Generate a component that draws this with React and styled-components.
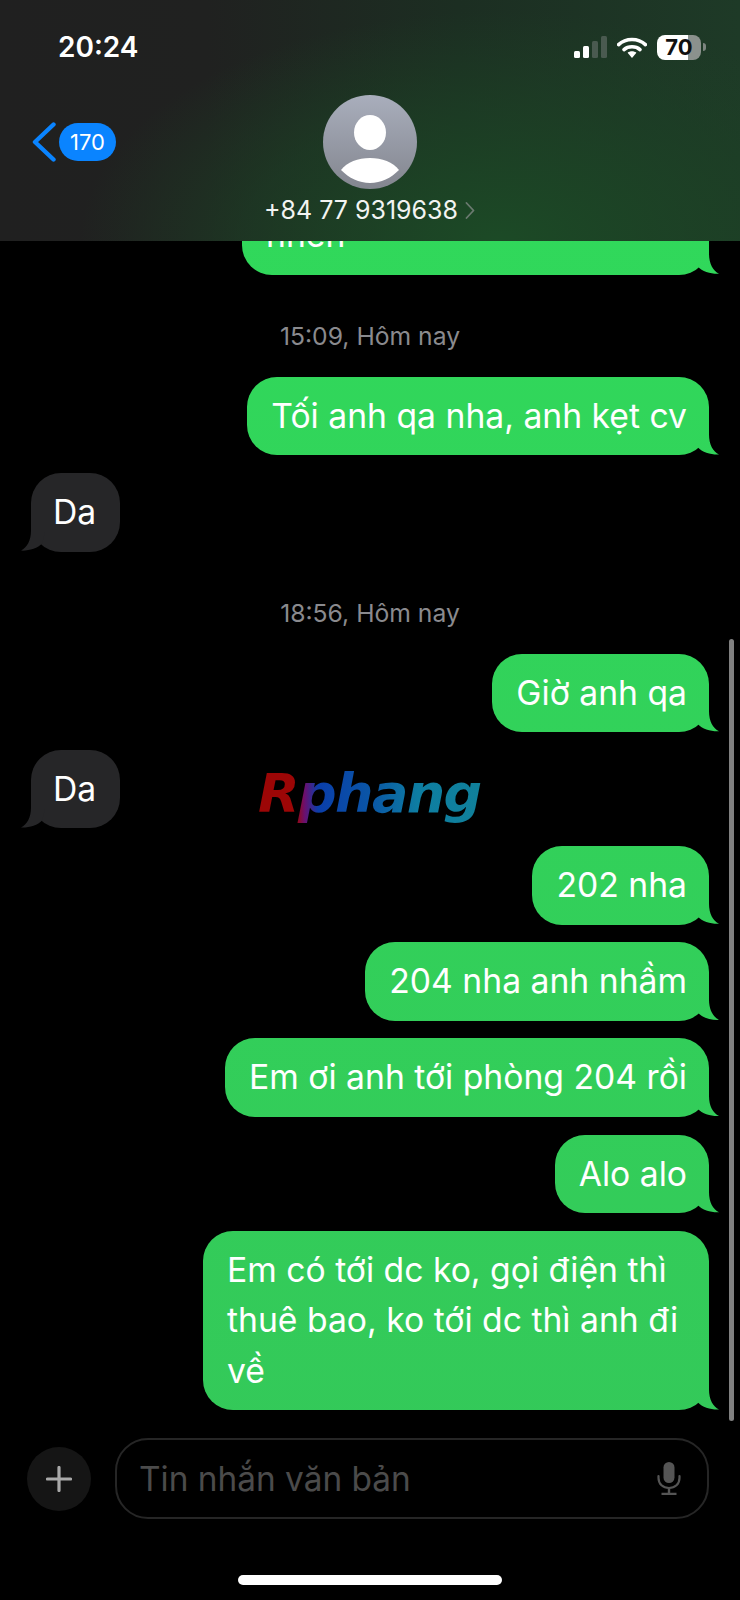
import React from "react";
import styled, { createGlobalStyle } from "styled-components";

const Global = createGlobalStyle`
  html, body { margin: 0; padding: 0; background: #000; }
  * { box-sizing: border-box; }
`;

const font = `Inter, "Noto Sans", "Liberation Sans", sans-serif`;

const Screen = styled.div`
  position: relative;
  width: 740px;
  height: 1600px;
  overflow: hidden;
  display: flex;
  flex-direction: column;
  background: #000;
  color: #fff;
  font-family: ${font};
`;

const Header = styled.header`
  height: 241px;
  flex: none;
  padding: 33px 34px 0 58px;
  background:
    radial-gradient(ellipse 420px 230px at 500px 241px, rgba(28, 74, 38, 1), rgba(28, 66, 37, 0.6) 60%, rgba(28, 50, 34, 0) 100%),
    linear-gradient(90deg, #202020 0%, #202120 28%, #1c2e22 62%, #1e3a27 100%);
`;

const StatusBar = styled.div`
  display: flex;
  align-items: center;
  justify-content: space-between;
  height: 28px;
`;

const Clock = styled.span`
  font-size: 28px;
  font-weight: 600;
`;

const StatusIcons = styled.div`
  display: flex;
  align-items: center;
  gap: 10px;
`;

const Battery = styled.div`
  width: 44px;
  height: 25px;
  border-radius: 8px;
  overflow: hidden;
  background: linear-gradient(90deg, #fff 0 70%, #8b918d 70% 100%);
  color: #111;
  font-size: 22px;
  font-weight: 700;
  line-height: 25px;
  text-align: center;
`;

const BatteryCap = styled.div`
  width: 3px;
  height: 8px;
  margin-left: -8px;
  border-radius: 0 3px 3px 0;
  background: #7d8580;
`;

const Nav = styled.div`
  margin: 34px -2px 0 -26px;
  display: grid;
  grid-template-columns: 1fr auto 1fr;
  align-items: start;
`;

const Back = styled.div`
  display: flex;
  align-items: center;
  gap: 3px;
  height: 40px;
  margin-top: 27px;
`;

const Badge = styled.span`
  width: 57px;
  height: 38px;
  border-radius: 19px;
  background: #0a84ff;
  font-size: 22px;
  line-height: 38px;
  text-align: center;
`;

const Contact = styled.div`
  display: flex;
  flex-direction: column;
  align-items: center;
`;

const NumberRow = styled.div`
  display: flex;
  align-items: center;
  gap: 7px;
  margin-top: 6px;
  margin-right: 1px;
  font-size: 25px;
  line-height: 30px;
  color: #f2f4f2;
`;

const Thread = styled.main`
  flex: 1;
  min-height: 0;
  overflow: hidden;
  display: flex;
  flex-direction: column;
  gap: 17.5px;
  padding: 0 31px;
`;

const Stamp = styled.div`
  height: 28px;
  margin: 30px 0 9px;
  font-size: 24.7px;
  line-height: 28px;
  font-weight: 400;
  color: #8a8a8e;
  text-align: center;
`;

const Bubble = styled.div`
  position: relative;
  flex: none;
  align-self: ${(p) => (p.$in ? "flex-start" : "flex-end")};
  width: ${(p) => (p.$width ? `${p.$width}px` : "auto")};
  max-width: 506px;
  padding: ${(p) => (p.$in ? "14.1px 24px 14.1px 22px" : "14.1px 22px 14.1px 24px")};
  border-radius: 30px;
  font-size: 33.7px;
  line-height: 50.5px;
  color: #fff;
  background: ${(p) =>
    p.$in ? "#262628" : "linear-gradient(180deg, #30db5b 0, #34c759 1600px) fixed"};
  margin-top: ${(p) => p.$offset || 0}px;
  &::after {
    content: "";
    position: absolute;
    bottom: 0;
    ${(p) => (p.$in ? "left: -10px;" : "right: -10px;")}
    width: 24px;
    height: 31px;
    background: inherit;
    clip-path: ${(p) =>
      p.$in
        ? `path("M10 0 L10 10 C10 20 6 27 0 30 C7 30.5 17 28 21 23 L24 12 L24 0 Z")`
        : `path("M14 0 L14 10 C14 20 18 27 24 30 C17 30.5 7 28 3 23 L0 12 L0 0 Z")`};
  }
`;

const Watermark = styled.div`
  position: absolute;
  left: 258px;
  top: 758px;
  font-family: "DejaVu Sans", sans-serif;
  font-size: 54px;
  line-height: 72px;
  font-weight: 700;
  font-style: italic;
  letter-spacing: -1.6px;
  color: transparent;
  background: linear-gradient(90deg, #9c0606 0 17%, #6a1070 21%, #0a3eaa 27%, #0a55a6 50%, #0e7ea2 72%, #10809a 100%);
  -webkit-background-clip: text;
  background-clip: text;
`;

const ScrollThumb = styled.div`
  position: absolute;
  left: 729px;
  top: 639px;
  width: 5px;
  height: 782px;
  border-radius: 3px;
  background: #808080;
`;

const Composer = styled.footer`
  flex: none;
  height: 180px;
  padding: 18px 31px 0 27px;
  display: flex;
  flex-direction: column;
`;

const InputRow = styled.div`
  display: flex;
  align-items: center;
  gap: 24px;
`;

const Plus = styled.div`
  flex: none;
  width: 64px;
  height: 64px;
  border-radius: 50%;
  background: #151515;
  display: flex;
  align-items: center;
  justify-content: center;
`;

const Field = styled.div`
  flex: 1;
  height: 81px;
  padding: 0 26px 0 22px;
  border: 2px solid #262626;
  border-radius: 33px;
  display: flex;
  align-items: center;
  justify-content: space-between;
`;

const Placeholder = styled.span`
  font-size: 33.4px;
  color: #4b4b4b;
`;

const HomeBar = styled.div`
  width: 264px;
  height: 10px;
  border-radius: 5px;
  background: #fff;
  margin: 56px 0 0 211px;
`;

const Signal = () => (
  <svg width="33" height="22" viewBox="0 0 33 22">
    <rect x="0" y="15" width="6" height="7" rx="1.5" fill="#fff" />
    <rect x="9" y="10" width="6" height="12" rx="1.5" fill="#fff" />
    <rect x="18" y="5" width="6" height="17" rx="1.5" fill="#4a5a50" />
    <rect x="27" y="0" width="6" height="22" rx="1.5" fill="#4a5a50" />
  </svg>
);

const Wifi = () => (
  <svg width="30" height="21" viewBox="0 0 30 21" fill="none">
    <path d="M1.6 7.6C8.8 .8 21.2 .8 28.4 7.6" stroke="#fff" strokeWidth="3.6" strokeLinecap="round" />
    <path d="M7 12.6C11.2 8.8 18.8 8.8 23 12.6" stroke="#fff" strokeWidth="3.6" strokeLinecap="round" />
    <path d="M10.6 15.8C13 13.8 17 13.8 19.4 15.8L15 21Z" fill="#fff" />
  </svg>
);

const Chevron = () => (
  <svg width="24" height="40" viewBox="0 0 24 40" fill="none">
    <path d="M21.5 2.5L3 20L21.5 37.5" stroke="#0a84ff" strokeWidth="4.4" strokeLinecap="round" strokeLinejoin="round" />
  </svg>
);

const Avatar = () => (
  <svg width="94" height="94" viewBox="0 0 94 94">
    <defs>
      <linearGradient id="av" x1="0" y1="0" x2="0" y2="1">
        <stop offset="0" stopColor="#a9aebc" />
        <stop offset="1" stopColor="#83868f" />
      </linearGradient>
    </defs>
    <circle cx="47" cy="47" r="47" fill="url(#av)" />
    <ellipse cx="47" cy="37.5" rx="16" ry="17.5" fill="#fff" />
    <path d="M18 75C24 67 35 63 47 63C59 63 70 67 76 75C68 83 58 88 47 88C36 88 26 83 18 75Z" fill="#fff" />
  </svg>
);

const SmallChevron = () => (
  <svg width="10" height="17" viewBox="0 0 10 17" fill="none">
    <path d="M1.5 1L8.5 8.5L1.5 16" stroke="#6b7a70" strokeWidth="1.8" strokeLinecap="round" strokeLinejoin="round" />
  </svg>
);

const Mic = () => (
  <svg width="24" height="33" viewBox="0 0 24 33" fill="none">
    <rect x="6.5" y="0" width="11" height="21" rx="5.5" fill="#555" />
    <path d="M1.5 14V16C1.5 22 6 26 12 26C18 26 22.5 22 22.5 16V14" stroke="#555" strokeWidth="2.2" strokeLinecap="round" />
    <path d="M12 26V31M4.5 32H19.5" stroke="#555" strokeWidth="2.4" />
  </svg>
);

const PlusIcon = () => (
  <svg width="26" height="26" viewBox="0 0 26 26" fill="none">
    <path d="M13 1.5V24.5M1.5 13H24.5" stroke="#a9a9a9" strokeWidth="3.2" strokeLinecap="round" />
  </svg>
);

export default function App() {
  return (
    <Screen>
      <Global />
      <Header>
        <StatusBar>
          <Clock>20:24</Clock>
          <StatusIcons>
            <Signal />
            <Wifi />
            <Battery>70</Battery>
            <BatteryCap />
          </StatusIcons>
        </StatusBar>
        <Nav>
          <Back>
            <Chevron />
            <Badge>170</Badge>
          </Back>
          <Contact>
            <Avatar />
            <NumberRow>
              +84 77 9319638
              <SmallChevron />
            </NumberRow>
          </Contact>
          <span />
        </Nav>
      </Header>
      <Thread>
        <Bubble $offset={-45} $width={467}>nhen</Bubble>
        <Stamp>15:09, Hôm nay</Stamp>
        <Bubble>Tối anh qa nha, anh kẹt cv</Bubble>
        <Bubble $in>Da</Bubble>
        <Stamp>18:56, Hôm nay</Stamp>
        <Bubble>Giờ anh qa</Bubble>
        <Bubble $in>Da</Bubble>
        <Bubble>202 nha</Bubble>
        <Bubble>204 nha anh nhầm</Bubble>
        <Bubble>Em ơi anh tới phòng 204 rồi</Bubble>
        <Bubble>Alo alo</Bubble>
        <Bubble>Em có tới dc ko, gọi điện thì thuê bao, ko tới dc thì anh đi về</Bubble>
      </Thread>
      <Composer>
        <InputRow>
          <Plus><PlusIcon /></Plus>
          <Field>
            <Placeholder>Tin nhắn văn bản</Placeholder>
            <Mic />
          </Field>
        </InputRow>
        <HomeBar />
      </Composer>
      <Watermark>Rphang</Watermark>
      <ScrollThumb />
    </Screen>
  );
}
